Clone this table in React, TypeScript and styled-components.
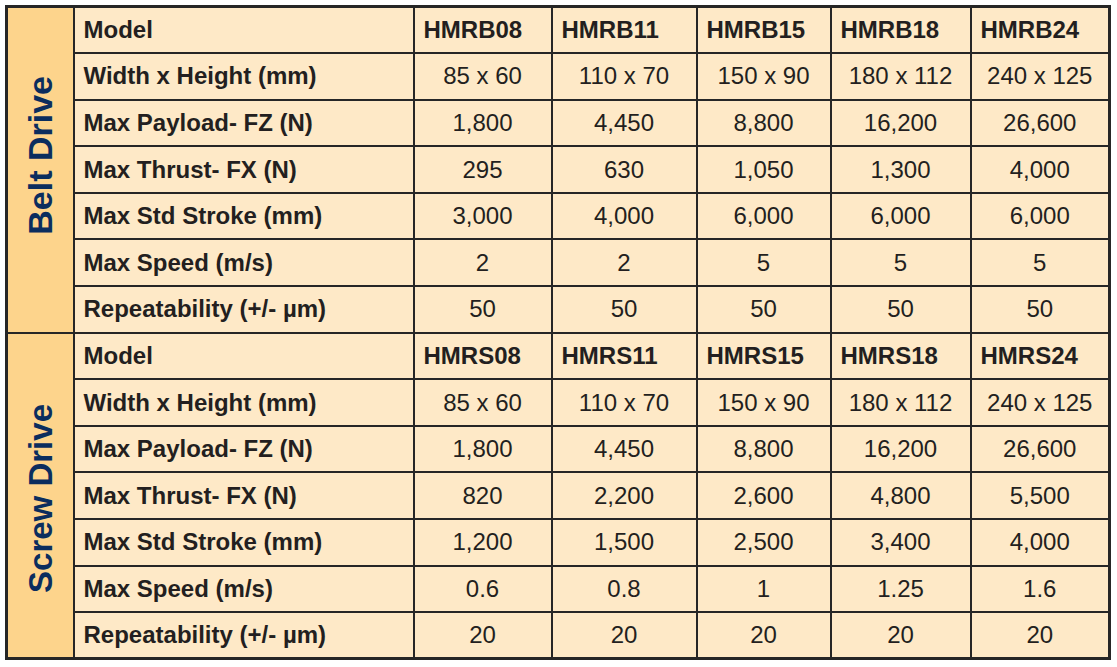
import React from "react";
import styled, { createGlobalStyle } from "styled-components";

const GlobalStyle = createGlobalStyle`
    html, body {
        margin: 0;
        padding: 0;
        background: #ffffff;
    }
    body {
        font-family: "Liberation Sans", Arial, sans-serif;
    }
`;

const Page = styled.div`
    padding: 5px 0 0 5px;
`;

const Table = styled.table`
    border-collapse: collapse;
    table-layout: fixed;
    width: 1103px;
    border: 3px solid #262626;
    color: #231f20;
    font-size: 24px;
`;

const Row = styled.tr`
    height: 46.6px;
`;

const SectionCell = styled.td<{ $shift: number }>`
    background: #fdd48c;
    border: 2px solid #262626;
    padding: 0;
    padding-top: ${(p) => (p.$shift > 0 ? p.$shift * 2 : 0)}px;
    padding-bottom: ${(p) => (p.$shift < 0 ? -p.$shift * 2 : 0)}px;
    text-align: center;
    vertical-align: middle;
`;

const SectionLabel = styled.span<{ $size: number }>`
    display: inline-block;
    writing-mode: vertical-rl;
    transform: rotate(180deg);
    font-size: ${(p) => p.$size}px;
    font-weight: 700;
    color: #0b2d5e;
    white-space: nowrap;
    line-height: 1;
`;

const Cell = styled.td<{ $bold?: boolean; $left?: boolean }>`
    background: #fee9c7;
    border: 2px solid #262626;
    padding: 0 0 0 ${(p) => (p.$left ? 9 : 0)}px;
    text-align: ${(p) => (p.$left ? "left" : "center")};
    font-weight: ${(p) => (p.$bold ? 700 : 400)};
    vertical-align: middle;
    white-space: nowrap;
    line-height: 1;
`;

interface Section {
    title: string;
    size: number;
    shift: number;
    models: string[];
    rows: [string, string[]][];
}

const sections: Section[] = [
    {
        title: "Belt Drive",
        size: 34,
        shift: -11,
        models: ["HMRB08", "HMRB11", "HMRB15", "HMRB18", "HMRB24"],
        rows: [
            ["Width x Height (mm)", ["85 x 60", "110 x 70", "150 x 90", "180 x 112", "240 x 125"]],
            ["Max Payload- FZ (N)", ["1,800", "4,450", "8,800", "16,200", "26,600"]],
            ["Max Thrust- FX (N)", ["295", "630", "1,050", "1,300", "4,000"]],
            ["Max Std Stroke (mm)", ["3,000", "4,000", "6,000", "6,000", "6,000"]],
            ["Max Speed (m/s)", ["2", "2", "5", "5", "5"]],
            ["Repeatability (+/- µm)", ["50", "50", "50", "50", "50"]],
        ],
    },
    {
        title: "Screw Drive",
        size: 33,
        shift: 6,
        models: ["HMRS08", "HMRS11", "HMRS15", "HMRS18", "HMRS24"],
        rows: [
            ["Width x Height (mm)", ["85 x 60", "110 x 70", "150 x 90", "180 x 112", "240 x 125"]],
            ["Max Payload- FZ (N)", ["1,800", "4,450", "8,800", "16,200", "26,600"]],
            ["Max Thrust- FX (N)", ["820", "2,200", "2,600", "4,800", "5,500"]],
            ["Max Std Stroke (mm)", ["1,200", "1,500", "2,500", "3,400", "4,000"]],
            ["Max Speed (m/s)", ["0.6", "0.8", "1", "1.25", "1.6"]],
            ["Repeatability (+/- µm)", ["20", "20", "20", "20", "20"]],
        ],
    },
];

const colWidths = [67, 340, 138, 145, 134, 140, 139];

export default function App() {
    return (
        <Page>
            <GlobalStyle />
            <Table>
                <colgroup>
                    {colWidths.map((w, i) => (
                        <col key={i} style={{ width: w }} />
                    ))}
                </colgroup>
                <tbody>
                    {sections.map((s) => (
                        <React.Fragment key={s.title}>
                            <Row>
                                <SectionCell rowSpan={7} $shift={s.shift}>
                                    <SectionLabel $size={s.size}>{s.title}</SectionLabel>
                                </SectionCell>
                                <Cell $bold $left>Model</Cell>
                                {s.models.map((m) => (
                                    <Cell key={m} $bold $left>
                                        {m}
                                    </Cell>
                                ))}
                            </Row>
                            {s.rows.map(([label, values]) => (
                                <Row key={label}>
                                    <Cell $bold $left>{label}</Cell>
                                    {values.map((v, i) => (
                                        <Cell key={i}>{v}</Cell>
                                    ))}
                                </Row>
                            ))}
                        </React.Fragment>
                    ))}
                </tbody>
            </Table>
        </Page>
    );
}
